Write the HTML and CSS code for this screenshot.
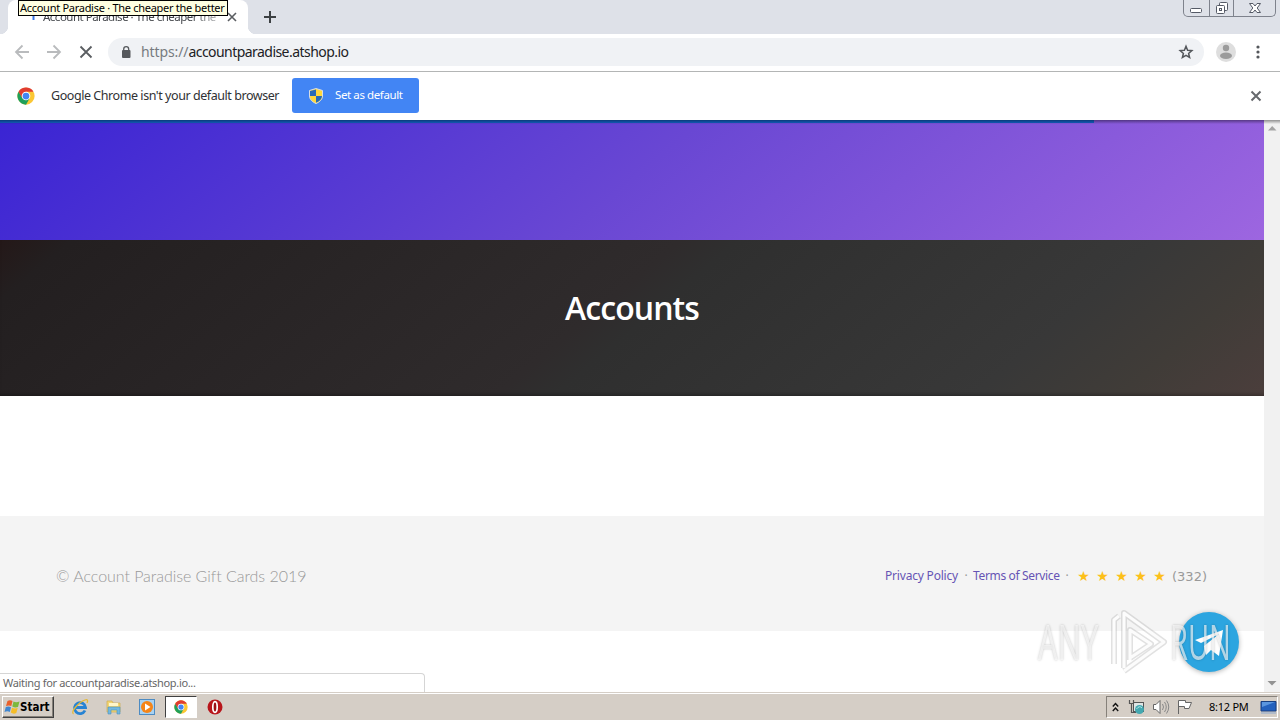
FILE: index.html
```
<!DOCTYPE html>
<html lang="en">
<head>
  <meta charset="UTF-8" />
  <title>Account Paradise · The cheaper the better</title>
  <link rel="stylesheet" href="styles.css">
</head>
<body>
  <!-- shared logo -->
  <svg width="0" height="0" class="defs">
    <symbol id="chrome" viewBox="0 0 48 48">
      <circle cx="24" cy="24" r="23" fill="#fbc734"/>
      <path d="M4.100 12.500A23 23 0 0 0 24 47L33 31H17z" fill="#1fa05a"/>
      <path d="M4.100 12.500A23 23 0 0 1 43.900 12.500H24L14 29.700z" fill="#e03c31"/>
      <circle cx="24" cy="24" r="11.500" fill="#fff"/>
      <circle cx="24" cy="24" r="9" fill="#4285f4"/>
    </symbol>
  </svg>

  <div class="tabstrip">
    <div class="tab">
      <svg class="spinner" width="16" height="16" viewBox="0 0 16 16"><path d="M7.500 7v4" stroke="#3b78e7" stroke-width="2"/></svg>
      <span class="tab-title">Account Paradise · The cheaper the</span>
      <svg class="tab-close" width="10" height="10" viewBox="0 0 10 10"><path d="M1 1l8 8M9 1l-8 8" stroke="#5a5d61" stroke-width="1.600"/></svg>
    </div>
    <svg class="new-tab" width="14" height="14" viewBox="0 0 14 14"><path d="M7 1v12M1 7h12" stroke="#3c4043" stroke-width="2"/></svg>
    <div class="win-buttons">
      <span class="win-min"><svg width="14" height="16" viewBox="0 0 14 16"><rect x="1.500" y="8.500" width="11" height="4" rx="1" fill="#fff" stroke="#555a66"/></svg></span>
      <span class="win-max"><svg width="14" height="16" viewBox="0 0 14 16"><rect x="4.500" y="2.500" width="8" height="8" rx="1" fill="#fff" stroke="#555a66"/><rect x="1.500" y="5.500" width="8" height="8" rx="1" fill="#fff" stroke="#555a66"/><rect x="4.500" y="8.500" width="2" height="2" fill="none" stroke="#555a66"/></svg></span>
      <span class="win-close"><svg width="14" height="16" viewBox="0 0 14 16"><path d="M1.500 3.500h3.500l2 2.500 2-2.500h3.500l-3.300 4.500 3.300 4.500H9L7 10l-2 2.500H1.500L4.800 8z" fill="#fff" stroke="#555a66"/></svg></span>
    </div>
    <div class="tooltip"><span>Account Paradise · The cheaper the better</span></div>
  </div>

  <div class="toolbar">
    <svg class="nav-btn" width="16" height="16" viewBox="0 0 16 16"><path d="M15 8H2M8.500 1.500 2 8l6.500 6.500" fill="none" stroke="#b9bbbd" stroke-width="1.800"/></svg>
    <svg class="nav-btn" width="16" height="16" viewBox="0 0 16 16"><path d="M1 8h13M7.500 1.500 14 8l-6.500 6.500" fill="none" stroke="#b9bbbd" stroke-width="1.800"/></svg>
    <svg class="nav-btn" width="16" height="16" viewBox="0 0 16 16"><path d="M2.500 2.500l11 11M13.500 2.500l-11 11" stroke="#5a5d61" stroke-width="1.800"/></svg>
    <div class="omnibox">
      <svg width="10" height="12" viewBox="0 0 10 12"><rect x="1" y="4" width="8.500" height="8" rx="1" fill="#56595d"/><path d="M2.700 5V3.200a2.500 2.500 0 0 1 5 0V5" fill="none" stroke="#56595d" stroke-width="1.300"/></svg>
      <span class="url"><span class="scheme">https://</span>accountparadise.atshop.io</span>
      <svg class="star" width="16" height="16" viewBox="0 0 16 16"><path d="M8 2.300l1.600 4 4.200.3-3.200 2.800 1 4.100L8 11.300l-3.600 2.200 1-4.100-3.200-2.800 4.200-.3z" fill="none" stroke="#54575b" stroke-width="1.500"/></svg>
    </div>
    <svg class="avatar" width="20" height="20" viewBox="0 0 20 20"><circle cx="10" cy="10" r="10" fill="#dedede"/><circle cx="10" cy="6" r="3.200" fill="#9b9b9b"/><ellipse cx="10" cy="13.800" rx="6" ry="3.200" fill="#9b9b9b"/></svg>
    <svg class="menu" width="4" height="14" viewBox="0 0 4 14"><g fill="#54575b"><circle cx="2" cy="2" r="1.600"/><circle cx="2" cy="7" r="1.600"/><circle cx="2" cy="12" r="1.600"/></g></svg>
  </div>

  <div class="infobar">
    <svg width="18" height="18"><use href="#chrome"/></svg>
    <span class="infobar-text">Google Chrome isn't your default browser</span>
    <div class="default-btn">
      <svg width="14" height="16" viewBox="0 0 14 16"><path d="M7 .5 13.500 2.500V8c0 3.500-3 6-6.500 7.500C3.500 14 .5 11.500.5 8V2.500z" fill="#ffd83b" stroke="#d7dde5"/><path d="M7 1.500V8H1V3zM7 8h6c0 3-2.500 5.200-6 6.700z" fill="#286bb5"/></svg>
      <span>Set as default</span>
    </div>
    <svg class="infobar-close" width="12" height="12" viewBox="0 0 12 12"><path d="M1.500 1.500l9 9M10.500 1.500l-9 9" stroke="#66696d" stroke-width="2"/></svg>
  </div>

  <div class="viewport">
    <div class="page">
      <div class="progress"></div>
      <div class="hero"></div>
      <div class="category"><h1>Accounts</h1></div>
      <div class="empty"></div>
      <footer class="footer">
        <span class="copyright">© Account Paradise Gift Cards 2019</span>
        <div class="links">
          <a class="privacy">Privacy Policy</a>
          <span class="dot">·</span>
          <a class="terms">Terms of Service</a>
          <span class="dot">·</span>
          <span class="stars"><i>★</i><i>★</i><i>★</i><i>★</i><i>★</i></span>
          <span class="count">(332)</span>
        </div>
      </footer>
    </div>
    <div class="scrollbar">
      <svg width="16" height="16" viewBox="0 0 16 16"><path d="M4 10.500h8.500L8.200 6z" fill="#a3a3a3"/></svg>
      <svg width="16" height="16" viewBox="0 0 16 16"><path d="M3.500 5h9L8 9.500z" fill="#929292"/></svg>
    </div>
    <div class="status">Waiting for accountparadise.atshop.io...</div>
    <div class="chat">
      <svg width="60" height="60" viewBox="0 0 60 60"><path d="M16 28 44 18 40 44 32 38 27 43 25 34 40 22 22 31z" fill="#fff"/></svg>
    </div>
    <div class="watermark">
      <span class="any">ANY</span>
      <svg width="60" height="66" viewBox="0 0 60 66"><g fill="none" stroke-linejoin="round"><path d="M6 56V12L11 8M16 60V5L56 34 16 63M22 52V22L43 36 22 50" stroke="#aaa" stroke-opacity=".35" stroke-width="6"/><path d="M6 56V12L11 8M16 60V5L56 34 16 63M22 52V22L43 36 22 50" stroke="#fff" stroke-opacity=".9" stroke-width="3"/></g></svg>
      <span class="run">RUN</span>
    </div>
  </div>

  <div class="taskbar">
    <div class="start">
      <svg width="17" height="16" viewBox="0 0 17 16"><path d="M3.500 2Q6 .5 8.500 2L7.300 7Q5 6 2 7z" fill="#e9602b"/><path d="M9.500 2.500Q12 4 15.500 2.500L14 8Q11 9 8.300 7.500z" fill="#7cb83c"/><path d="M1.800 8Q4.500 7 7 8.200L5.800 13Q3.500 11.500.5 13z" fill="#3f86d0"/><path d="M8 8.700Q10.500 10 13.700 9L12.300 14Q9.500 15.500 6.800 13.500z" fill="#f5bd28"/></svg>
      <span>Start</span>
    </div>
    <div class="quick">
      <svg width="18" height="18" viewBox="0 0 18 18"><path d="M14 12.500A5.500 5.500 0 1 1 14.500 9.500H5" fill="none" stroke="#2783d3" stroke-width="2.800"/><path d="M2.500 16C-1 14 8 4 14 2c3-1 3 1 2 3" fill="none" stroke="#e5b936" stroke-width="1.300"/></svg>
      <svg width="18" height="18" viewBox="0 0 18 18"><path d="M2 3h5l1 2h7v9H2z" fill="#f3d673" stroke="#cfae50" stroke-width=".7"/><path d="M4 5h9v3H4z" fill="#fff6c9"/><path d="M3 16V9h12v7h-3v-4H6v4z" fill="#73b8df" stroke="#4c91bd" stroke-width=".6"/></svg>
      <svg width="18" height="18" viewBox="0 0 18 18"><rect x="1.500" y="1.500" width="15" height="15" fill="#a8d2f2" stroke="#4d8bc2"/><circle cx="9" cy="9" r="6" fill="#f58518"/><path d="M7 5.500v7L12.500 9z" fill="#fff"/></svg>
      <div class="task-active"><svg width="14" height="14"><use href="#chrome"/></svg></div>
      <svg width="18" height="18" viewBox="0 0 18 18"><circle cx="9" cy="9" r="7.500" fill="#b8151b"/><ellipse cx="9" cy="9" rx="2.200" ry="5.300" fill="#9c1015" stroke="#fff" stroke-width="1.700"/></svg>
    </div>
    <div class="tray">
      <svg class="chev" width="7" height="10" viewBox="0 0 7 10"><path d="M.8 4.500 3.500 1.500l2.700 3M.8 9 3.500 6l2.700 3" fill="none" stroke="#111" stroke-width="1.400"/></svg>
      <svg class="net" width="18" height="16" viewBox="0 0 18 16"><rect x="5.500" y="3.500" width="10" height="9" fill="#dfe6e6" stroke="#555"/><path d="M1.500 1v3.500h4V1M3.500 4.500v9H8" fill="none" stroke="#555" stroke-width="1.200"/><circle cx="11.500" cy="10.500" r="4.500" fill="#43a8b0"/><path d="M8.500 10q3-4 5.500-1" stroke="#b7e5e7" fill="none"/></svg>
      <svg class="vol" width="18" height="16" viewBox="0 0 18 16"><path d="M1.500 5.500h2.500l4-4v13l-4-4H1.500z" fill="#fff" stroke="#666"/><path d="M10.500 5q2 3 0 6M12.500 3q3.500 5 0 10M14.500 1.500q4.500 6.500 0 13" fill="none" stroke="#888"/></svg>
      <svg class="flag" width="18" height="16" viewBox="0 0 18 16"><path d="M2.500 15V1.500h7v2h6L13 9.500H8.500v-2h-6" fill="#fff" stroke="#666"/></svg>
      <span class="clock">8:12 PM</span>
      <svg width="17" height="14" viewBox="0 0 17 14"><path d="M1 1.500h15V11H1z" fill="#2461bd" stroke="#183f80"/><path d="M2 2h13L2 7z" fill="#5b96df"/><path d="M1 13h15" stroke="#8ba7cd"/></svg>
    </div>
  </div>
</body>
</html>
```
FILE: styles.css
```
* {
  box-sizing: border-box;
}
body {
  margin: 0;
  width: 1280px;
  height: 720px;
  overflow: hidden;
  display: flex;
  flex-direction: column;
  background: #fff;
  font-family: "Noto Sans", "Open Sans", sans-serif;
  font-size: 11px;
  white-space: nowrap;
}
svg {
  display: block;
  flex-shrink: 0;
}
.defs {
  position: absolute;
}

/* tabs */
.tabstrip {
  position: relative;
  height: 34px;
  flex-shrink: 0;
  display: flex;
  align-items: center;
  background: #dee1e8;
  padding-left: 8px;
}
.tab {
  position: relative;
  width: 240px;
  height: 34px;
  display: flex;
  align-items: center;
  padding-left: 18px;
  background: #fff;
  border-radius: 8px 8px 0 0;
}
.tab::before,
.tab::after {
  content: "";
  position: absolute;
  bottom: 0;
  width: 8px;
  height: 8px;
}
.tab::before {
  left: -8px;
  background: radial-gradient(circle at 0 0, transparent 8px, #fff 8.5px);
}
.tab::after {
  right: -8px;
  background: radial-gradient(circle at 100% 0, transparent 8px, #fff 8.5px);
}
.tab-title {
  width: 176px;
  margin: -2px 0 0 1px;
  overflow: hidden;
  font-size: 11.5px;
  letter-spacing: -0.5px;
  color: #45484c;
  -webkit-mask-image: linear-gradient(90deg, #000 85%, rgba(0,0,0,0.3));
}
.tab-close {
  margin-left: 8px;
}
.new-tab {
  margin-left: 15px;
}
.win-buttons {
  display: flex;
  width: 93px;
  height: 17px;
  align-self: flex-start;
  margin: 0 4px 0 auto;
  border: 1px solid #7e828c;
  border-top: 0;
  border-radius: 0 0 5px 5px;
}
.win-buttons span {
  display: flex;
  justify-content: center;
  width: 25px;
}
.win-buttons span + span {
  border-left: 1px solid #7e828c;
}
.win-buttons .win-close {
  width: 42px;
}
.tooltip {
  position: absolute;
  left: 18px;
  top: 0;
  width: 210px;
  height: 16px;
  padding-left: 1px;
  border: 1px solid #000;
  background: #ffffe1;
  color: #000;
  line-height: 14px;
  letter-spacing: -0.28px;
}

/* address bar */
.toolbar {
  height: 38px;
  flex-shrink: 0;
  display: flex;
  align-items: center;
  padding: 0 0 1px 14px;
  border-bottom: 1px solid #b3b5b5;
}
.nav-btn {
  margin-right: 16px;
}
.omnibox {
  width: 1096px;
  height: 28px;
  display: flex;
  align-items: center;
  margin-left: -2px;
  padding: 0 10px 0 13px;
  border-radius: 14px;
  background: #f0f2f5;
}
.url {
  margin: -1px 0 0 10px;
  font-size: 14px;
  letter-spacing: -0.55px;
  color: #202124;
}
.scheme {
  letter-spacing: -0.1px;
  color: #777b80;
}
.star {
  margin-left: auto;
}
.avatar {
  margin-left: 12px;
}
.menu {
  margin-left: 20px;
}

/* default browser bar */
.infobar {
  height: 48px;
  flex-shrink: 0;
  display: flex;
  align-items: center;
  padding: 0 18px 1px 17px;
}
.infobar-text {
  width: 241px;
  margin: -1px 0 0 16px;
  font-size: 12.5px;
  letter-spacing: -0.44px;
  color: #303134;
}
.default-btn {
  width: 127px;
  height: 35px;
  display: flex;
  align-items: center;
  padding-left: 17px;
  border-radius: 3px;
  background: #4285f4;
  color: #fff;
  font-size: 11.5px;
  letter-spacing: -0.4px;
}
.default-btn span {
  margin: -2px 0 0 12px;
}
.infobar-close {
  margin-left: auto;
}

/* web page */
.viewport {
  position: relative;
  flex: 1;
  display: flex;
  overflow: hidden;
}
.viewport::before {
  content: "";
  position: absolute;
  left: 0;
  top: 0;
  width: 100%;
  height: 4px;
  z-index: 2;
  background: linear-gradient(rgba(0,0,0,0.4), transparent);
}
.page {
  position: relative;
  width: 1264px;
}
.progress {
  position: absolute;
  width: 1094px;
  height: 3px;
  background: #1262c8;
}
.hero {
  height: 120px;
  background: linear-gradient(140deg, #3a24d3, #6947d3 50%, #9d66e0);
}
.category {
  height: 156px;
  display: flex;
  justify-content: center;
  background: linear-gradient(140deg, #241818 0%, #231f20 5%, #2f2b2c 47%, #2f2f2f 51%, #383838 80%, #403c38 90%, #4b3e3c 100%);
  box-shadow: inset 0 -4px 4px -3px rgba(0,0,0,0.35);
}
.category h1 {
  margin: 46px 0 0;
  font: 600 32px/44px "Open Sans", "Noto Sans", sans-serif;
  letter-spacing: -0.95px;
  color: #fff;
}
.empty {
  height: 120px;
}
.footer {
  height: 115px;
  display: flex;
  align-items: center;
  justify-content: space-between;
  padding: 4px 57px 0 56px;
  background: #f4f4f4;
  font-family: Lato, sans-serif;
}
.copyright {
  font-size: 16px;
  font-weight: 300;
  color: #999;
  letter-spacing: -0.04px;
}
.links {
  display: flex;
  align-items: center;
  font-family: "Noto Sans", sans-serif;
  font-size: 12px;
  color: #999;
}
.links a {
  color: #6654b4;
}
.privacy {
  width: 74px;
  letter-spacing: -0.2px;
}
.terms {
  width: 87px;
  letter-spacing: -0.35px;
}
.dot {
  width: 14px;
  text-align: center;
}
.stars {
  display: flex;
  width: 96px;
  font: 14px/16px "DejaVu Sans", sans-serif;
  color: #fcc01a;
}
.stars i {
  width: 19px;
  text-align: center;
  font-style: normal;
}
.count {
  margin: 1px 0 0 2px;
  font-family: "DejaVu Sans", sans-serif;
  font-size: 13px;
}
.scrollbar {
  width: 16px;
  display: flex;
  flex-direction: column;
  justify-content: space-between;
  background: #f1f1f1;
}
.status {
  position: absolute;
  left: 0;
  bottom: 0;
  width: 425px;
  height: 19px;
  padding-left: 3px;
  border: 1px solid #d5d5d5;
  border-left: 0;
  border-bottom: 0;
  border-radius: 0 4px 0 0;
  background: #fff;
  color: #666;
  line-height: 18px;
  letter-spacing: -0.32px;
}
.chat {
  position: absolute;
  left: 1179px;
  top: 492px;
  width: 60px;
  height: 60px;
  border-radius: 50%;
  background: #2ca5e0;
  box-shadow: 0 1px 5px rgba(0,0,0,0.3);
}
.watermark {
  position: absolute;
  left: 1038px;
  top: 488px;
  width: 196px;
  height: 66px;
  display: flex;
  align-items: center;
  justify-content: space-between;
}
.watermark span {
  width: 64px;
  font: 50px/66px "Open Sans", sans-serif;
  color: rgba(255,255,255,0.65);
  text-shadow: 0 0 3px rgba(0,0,0,0.25);
  transform: scaleX(0.62);
  transform-origin: 0 50%;
}
.watermark .run {
  margin-left: -3px;
  transform: scaleX(0.58);
}

/* taskbar */
.taskbar {
  height: 28px;
  flex-shrink: 0;
  display: flex;
  align-items: center;
  padding: 0 2px;
  background: #d5cec6;
  border-top: 1px solid #d5cec6;
  box-shadow: inset 0 1px #fff;
}
.start {
  width: 52px;
  height: 22px;
  display: flex;
  align-items: center;
  padding-left: 1px;
  border: 1px solid;
  border-color: #fff #404040 #404040 #fff;
  box-shadow: inset -1px -1px #86817a;
  font: bold 11.5px "DejaVu Sans Condensed", "DejaVu Sans", sans-serif;
}
.start span {
  margin-left: -1px;
}
.quick {
  display: flex;
  align-items: center;
  margin-left: 17px;
}
.quick > svg {
  margin-right: 15.5px;
}
.task-active {
  width: 32px;
  height: 22px;
  display: flex;
  align-items: center;
  justify-content: center;
  margin: 0 9px 0 -7px;
  border: 1px solid;
  border-color: #404040 #fff #fff #404040;
  background: #fff;
}
.tray {
  width: 172px;
  height: 22px;
  display: flex;
  align-items: center;
  margin-left: auto;
  padding-left: 5px;
  border: 1px solid;
  border-color: #86817a #fff #fff #86817a;
}
.net {
  margin-left: 9px;
}
.vol,
.flag {
  margin-left: 6px;
}
.clock {
  width: 42px;
  margin: 0 9px 0 15px;
  letter-spacing: -0.25px;
  color: #000;
}
```
